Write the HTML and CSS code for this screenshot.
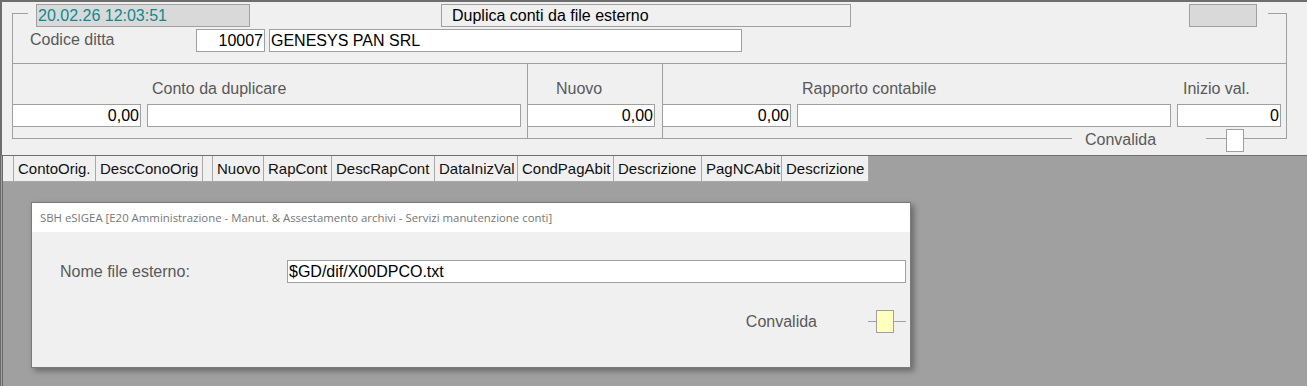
FILE: index.html
```html
<!DOCTYPE HTML>
<html>
<head>
    <meta name="viewport" content="width=device-width, height=device-height, initial-scale=1.0">
    <link rel="stylesheet" href="styles.css">
</head>
<body>
    <div class="panel">
        <div class="frame">
            <div class="head">
                <div class="stamp">20.02.26 12:03:51</div>
                <div class="title">Duplica conti da file esterno</div>
                <div class="blank"></div>
            </div>
            <div class="ditta">
                <div class="ditta-lbl">Codice ditta</div>
                <div class="fld num w-cod">10007</div>
                <div class="fld w-rag">GENESYS PAN SRL</div>
            </div>
            <div class="grid">
                <div class="col col-conto">
                    <div class="lbl"><span class="l-conto">Conto da duplicare</span></div>
                    <div class="fields">
                        <div class="fld num w-code">0,00</div>
                        <div class="fld w-desc"></div>
                    </div>
                </div>
                <div class="col col-nuovo">
                    <div class="lbl"><span class="l-nuovo">Nuovo</span></div>
                    <div class="fields">
                        <div class="fld num w-nuovo">0,00</div>
                    </div>
                </div>
                <div class="col col-rapp">
                    <div class="lbl"><span class="l-rapp">Rapporto contabile</span><span>Inizio val.</span></div>
                    <div class="fields">
                        <div class="fld num w-code">0,00</div>
                        <div class="fld w-desc"></div>
                        <div class="fld num w-data">0</div>
                    </div>
                </div>
            </div>
            <div class="foot">
                <div class="mask">Convalida</div>
                <div class="check"></div>
            </div>
        </div>
    </div>

    <div class="lower">
        <div class="tabs">
            <div class="tab" style="width: 11px;"></div>
            <div class="tab" style="width: 82px;">ContoOrig.</div>
            <div class="tab" style="width: 107px;">DescConoOrig</div>
            <div class="tab" style="width: 10px;"></div>
            <div class="tab" style="width: 51px;">Nuovo</div>
            <div class="tab" style="width: 68px;">RapCont</div>
            <div class="tab" style="width: 103px;">DescRapCont</div>
            <div class="tab" style="width: 83px;">DataInizVal</div>
            <div class="tab" style="width: 96px;">CondPagAbit</div>
            <div class="tab" style="width: 88px;">Descrizione</div>
            <div class="tab" style="width: 80px;">PagNCAbit</div>
            <div class="tab" style="width: 87px;">Descrizione</div>
        </div>

        <div class="dialog">
            <div class="dlg-title">SBH eSIGEA [E20 Amministrazione - Manut. &amp; Assestamento archivi - Servizi manutenzione conti]</div>
            <div class="dlg-row">
                <div class="dlg-lbl">Nome file esterno:</div>
                <div class="fld w-file">$GD/dif/X00DPCO.txt</div>
            </div>
            <div class="dlg-ok">
                <div class="ok-lbl">Convalida</div>
                <div class="tick-l"></div>
                <div class="check yellow"></div>
                <div class="tick-r"></div>
            </div>
        </div>
    </div>
</body>
</html>
```

FILE: styles.css
```css
*{
    padding: 0;
    margin: 0;
    box-sizing: border-box;
}
body {
    background-color: #a0a0a0;
    font-family: "Liberation Sans", Arial, sans-serif;
    font-size: 16px;
    color: #000;
}
.panel {
    height: 156px;
    background-color: #f0f0f0;
    border-top: 2px solid #6e6e6e;
    border-left: 2px solid #6e6e6e;
    border-bottom: 1px solid #6e6e6e;
}
.frame {
    margin: 11px 20px 0 10px;
    border: 1px solid #a0a0a0;
}
.head {
    display: flex;
    height: 23px;
    margin: -10px 18px 0 15px;
    background-color: #f0f0f0;
}
.stamp {
    width: 214px;
    margin-left: 8px;
    border: 1px solid #a0a0a0;
    background-color: #d9d9d9;
    color: #0b8a8f;
    padding-left: 1px;
    line-height: 21px;
}
.title {
    width: 410px;
    margin-left: 191px;
    border: 1px solid #a0a0a0;
    padding-left: 10px;
    line-height: 21px;
}
.blank {
    width: 68px;
    margin-left: auto;
    margin-right: 11px;
    border: 1px solid #a0a0a0;
    background-color: #d9d9d9;
}
.ditta {
    display: flex;
    gap: 4px;
    height: 23px;
    margin-top: 2px;
}
.ditta-lbl {
    width: 162px;
    margin-left: 17px;
    color: #595959;
    line-height: 22px;
}
.fld {
    height: 23px;
    border: 1px solid #a0a0a0;
    background-color: #fff;
    line-height: 21px;
    padding: 0 2px 0 1px;
    white-space: nowrap;
    overflow: hidden;
}
.num {
    text-align: right;
    padding: 0 1px 0 2px;
}
.w-cod { width: 69px; }
.w-rag { width: 473px; }
.w-code { width: 129px; }
.w-desc { width: 374px; }
.w-nuovo { width: 128px; }
.w-data { width: 104px; }
.w-file { width: 619px; }

.grid {
    display: flex;
    height: 75px;
    margin-top: 11px;
    border-top: 1px solid #a0a0a0;
}
.col-conto { width: 514px; }
.col-nuovo {
    width: 135px;
    border-left: 1px solid #a0a0a0;
}
.col-rapp {
    flex: 1;
    border-left: 1px solid #a0a0a0;
}
.lbl {
    display: flex;
    height: 20px;
    margin-top: 15px;
    line-height: 20px;
    color: #595959;
    white-space: nowrap;
}
.l-conto { margin-left: 139px; }
.l-nuovo { margin-left: 28px; }
.l-rapp {
    width: 520px;
    padding-left: 139px;
}
.fields {
    display: flex;
    gap: 6px;
    margin-top: 5px;
    margin-left: -1px;
}
.foot {
    display: flex;
    justify-content: flex-end;
    height: 23px;
    margin: -9px 0 -14px;
    padding-right: 42px;
}
.mask {
    width: 134px;
    padding-left: 13px;
    margin-right: 20px;
    background-color: #f0f0f0;
    color: #595959;
    line-height: 21px;
}
.check {
    width: 18px;
    height: 23px;
    border: 1px solid #a0a0a0;
    background-color: #fff;
}
.check.yellow { background-color: #ffffc0; }

.lower {
    height: 230px;
    border-left: 3px double #6a6a6a;
}
.tabs {
    display: flex;
    height: 26px;
}
.tab {
    height: 26px;
    background-color: #f0f0f0;
    border-right: 1px solid #a8a8a8;
    border-bottom: 1px solid #a8a8a8;
    padding-left: 4px;
    font-size: 15px;
    line-height: 25px;
    color: #111;
    white-space: nowrap;
    overflow: hidden;
}
.dialog {
    width: 880px;
    height: 166px;
    margin: 20px 0 0 28px;
    background-color: #f0f0f0;
    border: 1px solid #7a7a7a;
    box-shadow: 3px 3px 6px rgba(0, 0, 0, 0.35);
}
.dlg-title {
    height: 29px;
    padding-left: 8px;
    background-color: #fff;
    font-family: "Open Sans", "Noto Sans", sans-serif;
    font-size: 11.4px;
    line-height: 29px;
    color: #777;
    white-space: nowrap;
}
.dlg-row {
    display: flex;
    margin-top: 28px;
}
.dlg-lbl {
    width: 227px;
    margin-left: 28px;
    color: #595959;
    line-height: 23px;
}
.dlg-ok {
    display: flex;
    align-items: center;
    justify-content: flex-end;
    margin-top: 27px;
    padding-right: 4px;
}
.ok-lbl {
    margin-right: 51px;
    color: #595959;
    line-height: 23px;
}
.tick-l, .tick-r {
    height: 1px;
    background-color: #a0a0a0;
}
.tick-l { width: 8px; }
.tick-r { width: 12px; }
```
